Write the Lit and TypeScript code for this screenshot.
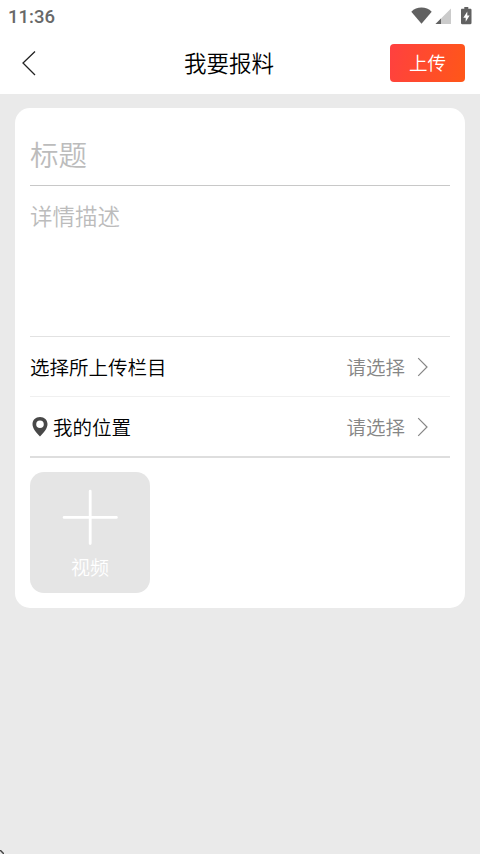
import { LitElement, html, css, svg } from "lit";
import { customElement, property } from "lit/decorators.js";

@customElement("select-row")
class SelectRow extends LitElement {
  @property() label = "";
  @property({ type: Boolean }) pin = false;

  static styles = css`
    :host { display: flex; align-items: center; box-sizing: border-box; padding-right: 21px; font-size: 19.5px; line-height: 28px; color: #000; }
    .pin { width: 16px; height: 20px; margin: 0 5px 0 2px; }
    .value { margin-left: auto; color: #868686; }
    .arrow { width: 12px; height: 20px; margin-left: 12px; }
  `;

  render() {
    return html`
      ${this.pin
        ? html`<svg class="pin" viewBox="0 0 16 20"><path fill="#484848" fill-rule="evenodd" d="M8 0C3.600 0 .5 3.100.5 7.100c0 4.600 3.700 8.600 7.500 12.300 3.800-3.700 7.500-7.700 7.500-12.300C15.500 3.100 12.400 0 8 0Zm0 3.500a3.800 3.800 0 1 1 0 7.600 3.800 3.800 0 0 1 0-7.600Z"/></svg>`
        : ""}
      <span>${this.label}</span>
      <span class="value">请选择</span>
      <svg class="arrow" viewBox="0 0 12 20"><path d="M1.200 1.200 10 10 1.200 18.800" fill="none" stroke="#868686" stroke-width="1.200"/></svg>
    `;
  }
}

@customElement("app-root")
class AppRoot extends LitElement {
  static styles = css`
    :host { display: flex; flex-direction: column; position: relative; height: 854px; background: #eaeaea; overflow: hidden; font-family: "Noto Sans CJK SC", sans-serif; font-weight: 350; }
    .status { height: 33px; box-sizing: border-box; background: #fff; display: flex; align-items: center; padding: 0 7px 0 8px; font: 500 18.500px/33px Roboto, sans-serif; color: #686868; }
    .status span { padding-top: 1px; }
    .signals { margin-left: auto; width: 64px; height: 33px; }
    .nav { height: 61px; box-sizing: border-box; background: #fff; display: grid; grid-template-columns: 90px 1fr 90px; align-items: center; padding-bottom: 1px; }
    .back { width: 16px; height: 26px; margin-left: 21px; }
    .title { text-align: center; font-size: 22.500px; line-height: 32px; color: #000; margin: 0 22px 2px 0; }
    .upload { width: 75px; height: 38px; margin-bottom: 1px; border-radius: 4px; background: linear-gradient(105deg, #ff4040, #ff5718); color: #fff; font-size: 18.500px; line-height: 37px; text-align: center; }
    .card { margin: 14px 15px 0; padding: 0 15px; height: 499.500px; box-sizing: border-box; background: #fff; border-radius: 15px; }
    .name { height: 78px; box-sizing: border-box; border-bottom: 1px solid #c8c8c8; padding-top: 26px; font-size: 28.500px; line-height: 40px; color: #bcbcbc; }
    .detail { height: 151px; box-sizing: border-box; border-bottom: 1px solid #e2e2e2; padding-top: 13px; font-size: 22.500px; line-height: 32px; color: #bcbcbc; }
    .row { height: 60px; border-bottom: 1px solid #f0f0f0; }
    .last { height: 61px; border-bottom: 2px solid #dedede; }
    .tile { width: 120px; height: 120.500px; margin-top: 14px; box-sizing: border-box; padding-top: 17px; border-radius: 14px; background: #e5e5e5; display: flex; flex-direction: column; align-items: center; color: #fff; font-size: 19px; line-height: 28px; }
    .plus { width: 56px; height: 56px; margin-bottom: 8px; }
    .corner { position: absolute; left: 0; bottom: 0; width: 4px; height: 4px; }
  `;

  render() {
    return html`
      <div class="status">
        <span>11:36</span>
        <svg class="signals" viewBox="0 0 64 33">
          ${svg`
            <path fill="#616161" d="M2.300 11.700C5.100 9 8.500 7.600 12.500 7.600s7.400 1.400 10.200 4.100L12.500 23.800Z"/>
            <path fill="#cbcbcb" d="M42 8.500V24H26.500Z"/>
            <path fill="#616161" d="M32 18.500V24H26.500Z"/>
            <path fill="#616161" fill-rule="evenodd" d="M55.300 7h4v1.800H61.400c.7 0 1.100.4 1.100 1.100V23.100c0 .7-.4 1.100-1.100 1.100h-8.300c-.7 0-1.100-.4-1.100-1.100V9.900c0-.7.400-1.100 1.100-1.100H55.300Zm3 4.500-4 6.200h2.400V21.800l3.900-6.200h-2.300Z"/>
          `}
        </svg>
      </div>
      <div class="nav">
        <svg class="back" viewBox="0 0 16 26"><path d="M14 1.500 2 13 14 25" fill="none" stroke="#222" stroke-width="1.300"/></svg>
        <div class="title">我要报料</div>
        <div class="upload">上传</div>
      </div>
      <div class="card">
        <div class="name">标题</div>
        <div class="detail">详情描述</div>
        <select-row class="row" label="选择所上传栏目"></select-row>
        <select-row class="row last" label="我的位置" pin></select-row>
        <div class="tile">
          <svg class="plus" viewBox="0 0 56 56"><path d="M28.200 2.200V54.500M2.100 28.400H54.400" stroke="#fff" stroke-width="2.800" stroke-linecap="round"/></svg>
          <span>视频</span>
        </div>
      </div>
      <svg class="corner" viewBox="0 0 4 4"><path d="M0 0 4 4" stroke="#444" stroke-width="1.500"/></svg>
    `;
  }
}
